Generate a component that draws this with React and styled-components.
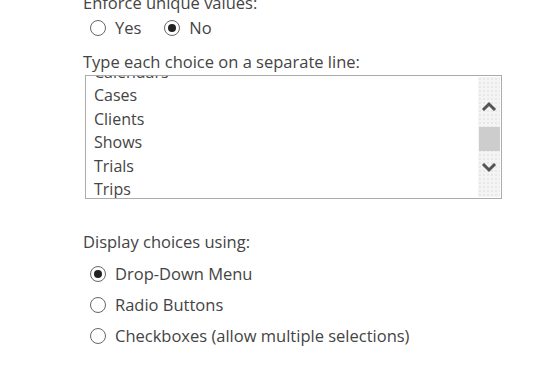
import React from 'react'
import styled, { createGlobalStyle } from 'styled-components'

const Global = createGlobalStyle`
body{
  margin:0;
  background:#fff;
  font-family:"Open Sans","Noto Sans",sans-serif;
  color:#444;
}
`

const Page = styled.div`
width:552px;
height:369px;
overflow:hidden;
padding-left:83px;
box-sizing:border-box;
`
const Label = styled.div`
font-size:16.5px;
line-height:20px;
margin-top:${p => p.top || 0}px;
`
const RadioRow = styled.div`
display:flex;
gap:${p => p.inline ? '23px' : '0'};
flex-direction:${p => p.inline ? 'row' : 'column'};
padding-left:7px;
margin-top:${p => p.top || 0}px;
`
const Option = styled.label`
display:flex;
align-items:center;
height:${p => p.h || 31}px;
font-size:16.5px;
gap:9px;
`
const Circle = styled.span`
width:16px;
height:16px;
box-sizing:border-box;
border:1px solid #666;
border-radius:50%;
display:flex;
align-items:center;
justify-content:center;
&::after{
  content:'';
  width:8px;
  height:8px;
  border-radius:50%;
  background:${p => p.checked ? '#222' : 'transparent'};
}
`
const Box = styled.div`
margin-top:3px;
margin-left:2px;
width:417px;
height:124px;
box-sizing:border-box;
border:1px solid #ababab;
display:flex;
overflow:hidden;
`
const Lines = styled.div`
flex:1;
padding-left:8px;
margin-top:-15px;
font-size:16px;
line-height:23.4px;
`
const Scroll = styled.div`
width:22px;
margin:1px;
background-color:#f4f4f4;
background-image:radial-gradient(#d8d8d8 0.6px, transparent 0.8px);
background-size:4px 4px;
display:flex;
flex-direction:column;
align-items:center;
padding-top:24px;
box-sizing:border-box;
`
const Thumb = styled.div`
width:21px;
height:24px;
background:#cdcdcd;
margin:16px 0 12px;
`

function Radio({ checked, children, h }) {
  return (
    <Option h={h}>
      <Circle checked={checked} />
      {children}
    </Option>
  )
}

function Chevron({ up }) {
  return (
    <svg width="16" height="10" viewBox="0 0 16 10">
      <path d={up ? 'M2 9 L8 3 L14 9' : 'M2 1 L8 7 L14 1'} fill="none" stroke="#555" strokeWidth="3" />
    </svg>
  )
}

export default function App() {
  const items = ['Calendars', 'Cases', 'Clients', 'Shows', 'Trials', 'Trips']
  return (
    <Page>
      <Global />
      <Label top={-7}>Enforce unique values:</Label>
      <RadioRow inline top={-1}>
        <Radio h={31}>Yes</Radio>
        <Radio checked h={31}>No</Radio>
      </RadioRow>
      <Label top={9}>Type each choice on a separate line:</Label>
      <Box>
        <Lines>
          {items.map(i => <div key={i}>{i}</div>)}
        </Lines>
        <Scroll>
          <Chevron up />
          <Thumb />
          <Chevron />
        </Scroll>
      </Box>
      <Label top={33}>Display choices using:</Label>
      <RadioRow top={6}>
        <Radio checked>Drop-Down Menu</Radio>
        <Radio>Radio Buttons</Radio>
        <Radio>Checkboxes (allow multiple selections)</Radio>
      </RadioRow>
    </Page>
  )
}
